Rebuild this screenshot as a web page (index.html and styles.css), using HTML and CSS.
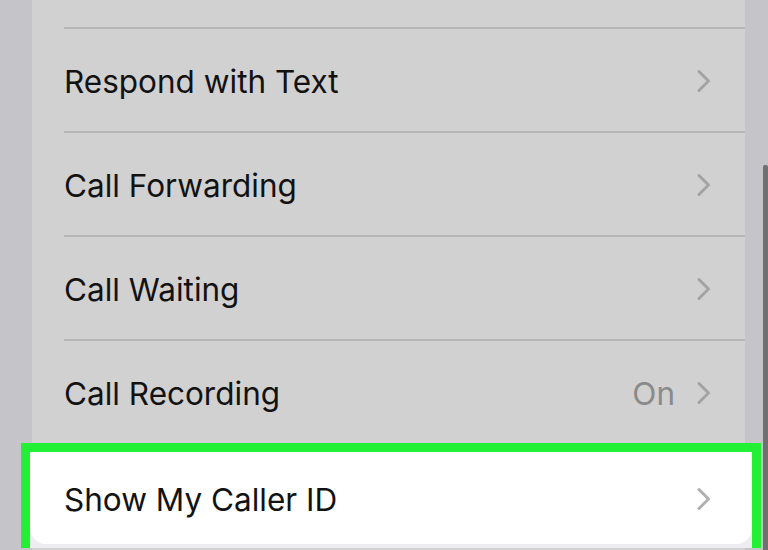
FILE: index.html
```html
<!DOCTYPE html>
<html>
<head>
<meta charset="utf-8">
<link rel="stylesheet" href="styles.css">
</head>
<body>
<div class="screen">
  <div class="gutter"></div>
  <div class="card">
    <div class="row partial"></div>
    <div class="row"><span class="label">Respond with Text</span><span class="chev"><svg width="16" height="24" viewBox="0 0 16 24"><path d="M3 2.5 L12.5 12 L3 21.5" fill="none" stroke="#a3a3a3" stroke-width="3" stroke-linecap="round" stroke-linejoin="round"/></svg></span></div>
    <div class="row"><span class="label">Call Forwarding</span><span class="chev"><svg width="16" height="24" viewBox="0 0 16 24"><path d="M3 2.5 L12.5 12 L3 21.5" fill="none" stroke="#a3a3a3" stroke-width="3" stroke-linecap="round" stroke-linejoin="round"/></svg></span></div>
    <div class="row"><span class="label">Call Waiting</span><span class="chev"><svg width="16" height="24" viewBox="0 0 16 24"><path d="M3 2.5 L12.5 12 L3 21.5" fill="none" stroke="#a3a3a3" stroke-width="3" stroke-linecap="round" stroke-linejoin="round"/></svg></span></div>
    <div class="row last"><span class="label">Call Recording</span><span class="value">On</span><span class="chev"><svg width="16" height="24" viewBox="0 0 16 24"><path d="M3 2.5 L12.5 12 L3 21.5" fill="none" stroke="#a3a3a3" stroke-width="3" stroke-linecap="round" stroke-linejoin="round"/></svg></span></div>
    <div class="highlight">
      <div class="hrow"><span class="label">Show My Caller ID</span><span class="chev"><svg width="16" height="24" viewBox="0 0 16 24"><path d="M3 2.5 L12.5 12 L3 21.5" fill="none" stroke="#b0b0b0" stroke-width="3" stroke-linecap="round" stroke-linejoin="round"/></svg></span></div>
    </div>
  </div>
  <div class="rail"><div class="scroll"></div></div>
</div>
</body>
</html>
```

FILE: styles.css
```css
html, body {
  margin: 0;
  padding: 0;
  width: 768px;
  height: 550px;
  overflow: hidden;
  background: #c5c5c9;
  font-family: Inter, "Noto Sans", "Liberation Sans", sans-serif;
}
.screen {
  display: flex;
  height: 550px;
  overflow: hidden;
}
.gutter {
  width: 32px;
  flex: none;
}
.card {
  width: 713px;
  flex: none;
  background: #d1d1d1;
  display: flex;
  flex-direction: column;
}
.row {
  height: 100px;
  flex: none;
  display: flex;
  align-items: center;
  margin-left: 32px;
  padding-right: 33px;
  padding-top: 2px;
  border-bottom: 2px solid #b6b6b6;
}
.row.partial {
  height: 25px;
}
.row.last {
  border-bottom: none;
  height: 100px;
}
.label {
  flex: 1;
  font-size: 31.5px;
  color: #121212;
}
.value {
  font-size: 31.5px;
  color: #8a8a8a;
  margin-right: 21px;
}
.chev {
  display: flex;
  align-items: center;
}
.highlight {
  margin: 0 -16px 0 -11px;
  border: 9px solid #22f035;
  border-bottom: none;
  background: #eeeef2;
  height: 96px;
  flex: none;
}
.hrow {
  height: 92px;
  box-sizing: border-box;
  padding-top: 2px;
  background: #ffffff;
  border-radius: 0 0 16px 16px;
  display: flex;
  align-items: center;
  padding-left: 34px;
  padding-right: 40px;
}
.rail {
  flex: 1;
  position: relative;
}
.scroll {
  position: absolute;
  right: 0;
  top: 165px;
  bottom: 0;
  width: 5px;
  background: #707070;
  border-radius: 2px 2px 0 0;
}
```
